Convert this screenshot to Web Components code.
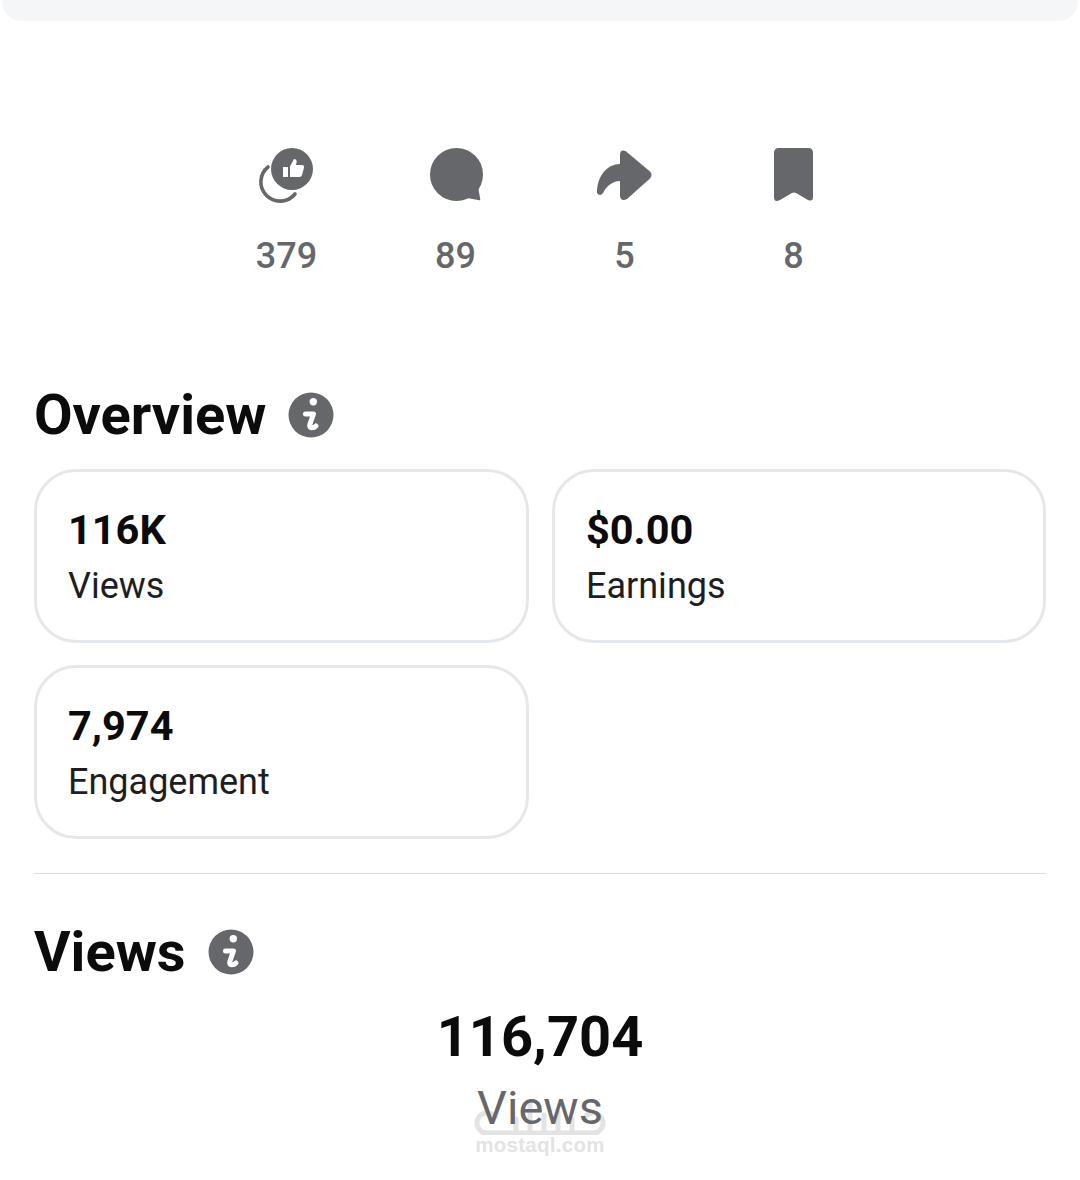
<!DOCTYPE html>
<html lang="en">
<head>
<meta charset="utf-8">
<title>Insights</title>
<style>
  html, body { margin: 0; background: #fff; }
  body { font-family: Roboto, "Liberation Sans", sans-serif; width: 1080px; height: 1180px; overflow: hidden; }
</style>
</head>
<body>
<insights-page>
  <stat-row>
    <stat-item value="379">
      <svg viewBox="0 0 60 60" width="60" height="60">
        <path d="M11 22A19.200 19.200 0 1 0 38 49" fill="none" stroke="#65676b" stroke-width="3.600" stroke-linecap="round"/>
        <circle cx="35" cy="24" r="21" fill="#65676b"/>
        <rect x="26" y="22" width="5" height="10" fill="#fff"/>
        <path d="M33 32V21.500l4-7.500c2 0 3 1.300 2.600 3.200L39 20h6c1.600 0 2.400 1.200 2 2.700l-2 7.300c-.4 1.300-1.200 2-2.500 2z" fill="#fff"/>
      </svg>
    </stat-item>
    <stat-item value="89">
      <svg viewBox="0 0 60 60" width="60" height="60">
        <circle cx="30.500" cy="29.500" r="26.500" fill="#65676b"/>
        <path d="M40 52L53.500 54.500 51 40z" fill="#65676b" stroke="#65676b" stroke-width="1.500" stroke-linejoin="round"/>
      </svg>
    </stat-item>
    <stat-item value="5">
      <svg viewBox="0 0 60 60" width="60" height="60">
        <path d="M25 10q0-6 5.500-4L55 26.500q3 3.500 0 7L32 54q-6 3-7-3V36C17 36 11 42 8 48q-3 4-6 0C2 30 13 19 25 19z" fill="#65676b"/>
      </svg>
    </stat-item>
    <stat-item value="8">
      <svg viewBox="0 0 60 60" width="60" height="60">
        <path d="M10 8q0-5 5-5H44q5 0 5 5V52q0 5-5 3L32 48q-2-1-4 0L16 55q-6 3-6-3z" fill="#65676b"/>
      </svg>
    </stat-item>
  </stat-row>

  <section-title style="margin-top:107px">Overview</section-title>
  <card-grid>
    <metric-card value="116K" label="Views"></metric-card>
    <metric-card value="$0.00" label="Earnings"></metric-card>
    <metric-card value="7,974" label="Engagement"></metric-card>
  </card-grid>
  <hr-line></hr-line>
  <section-title style="margin-top:48px">Views</section-title>
  <total-figure value="116,704" label="Views"></total-figure>
</insights-page>

<script>
// grey strip at the very top, stats, overview cards, views total
class InsightsPage extends HTMLElement {
  constructor() {
    super();
    this.attachShadow({ mode: "open" }).innerHTML = `
      <style>
        :host { display: block; position: relative; }
        .strip { height: 21px; margin: 0 2px; background: #f5f6f8; border-radius: 0 0 20px 20px; }
        .body { padding: 124px 34px 0; }
      </style>
      <div class="strip"></div>
      <div class="body"><slot></slot></div>`;
  }
}

class StatRow extends HTMLElement {
  constructor() {
    super();
    this.attachShadow({ mode: "open" }).innerHTML = `
      <style>
        :host { display: grid; grid-template-columns: repeat(4, 169px); justify-content: center; }
      </style>
      <slot></slot>`;
  }
}

class StatItem extends HTMLElement {
  constructor() {
    super();
    this.attachShadow({ mode: "open" }).innerHTML = `
      <style>
        :host { display: flex; flex-direction: column; align-items: center; }
        .icon { height: 60px; }
        .num { margin-top: 29px; font-size: 36px; line-height: 44px; font-weight: 500; color: #65676b; }
        ::slotted(svg) { display: block; }
      </style>
      <div class="icon"><slot></slot></div>
      <div class="num"></div>`;
  }
  connectedCallback() {
    this.shadowRoot.querySelector(".num").textContent = this.getAttribute("value");
  }
}

class SectionTitle extends HTMLElement {
  constructor() {
    super();
    this.attachShadow({ mode: "open" }).innerHTML = `
      <style>
        :host { display: flex; align-items: center; gap: 22px; height: 60px; }
        h2 { margin: 0; font-size: 56px; line-height: 60px; font-weight: 700; color: #0b0b0b; }
        svg { display: block; }
      </style>
      <h2><slot></slot></h2>
      <svg viewBox="0 0 46 46" width="46" height="46">
        <circle cx="23" cy="23" r="22.500" fill="#65676b"/>
        <circle cx="25.300" cy="9.700" r="3.700" fill="#fff"/>
        <path d="M17.500 22H25.500L21.800 32.500q-.8 3.300 2 3.300 2.500 0 4.200-1.800" fill="none" stroke="#fff" stroke-width="5" stroke-linecap="round" stroke-linejoin="round"/>
      </svg>`;
  }
}

class CardGrid extends HTMLElement {
  constructor() {
    super();
    this.attachShadow({ mode: "open" }).innerHTML = `
      <style>
        :host { display: grid; grid-template-columns: 495px 494px; gap: 22px 23px; margin-top: 24px; }
      </style>
      <slot></slot>`;
  }
}

class MetricCard extends HTMLElement {
  constructor() {
    super();
    this.attachShadow({ mode: "open" }).innerHTML = `
      <style>
        :host {
          display: block; box-sizing: border-box; height: 174px; padding: 34px 31px 0;
          border: 3px solid #e4e8ea; border-radius: 42px;
        }
        .val { font-size: 41.500px; line-height: 48px; font-weight: 700; color: #0b0b0b; }
        .lab { margin-top: 11px; font-size: 36px; line-height: 42px; color: #1c1e21; }
      </style>
      <div class="val"></div>
      <div class="lab"></div>`;
  }
  connectedCallback() {
    this.shadowRoot.querySelector(".val").textContent = this.getAttribute("value");
    this.shadowRoot.querySelector(".lab").textContent = this.getAttribute("label");
  }
}

class HrLine extends HTMLElement {
  constructor() {
    super();
    this.attachShadow({ mode: "open" }).innerHTML = `
      <style>:host { display: block; height: 1px; margin-top: 34px; background: #d9dbde; }</style>`;
  }
}

class TotalFigure extends HTMLElement {
  constructor() {
    super();
    this.attachShadow({ mode: "open" }).innerHTML = `
      <style>
        :host { display: flex; flex-direction: column; align-items: center; position: relative; margin-top: 23px; }
        .val { font-size: 56px; line-height: 64px; font-weight: 700; color: #0b0b0b; }
        .lab { position: relative; margin-top: 12px; font-size: 47px; line-height: 54px; color: #65676b; }
        /* faint site stamp lying over the bottom of the block */
        .stamp { position: absolute; left: 50%; top: 88px; width: 132px; margin-left: -66px; text-align: center; }
        .stamp svg { display: block; margin: 0 auto; }
        .stamp span { display: block; margin-top: -2px; font: 700 20.500px/24px "Liberation Sans", sans-serif; letter-spacing: .3px; color: #e3e3e3; }
      </style>
      <div class="val"></div>
      <div class="stamp">
        <svg viewBox="0 0 132 42" width="132" height="42" fill="none" stroke="#e3e3e3" stroke-width="5" stroke-linecap="round">
          <path d="M21 24A10 10 0 1 0 13 40H119A10 10 0 1 0 111 24"/>
          <path d="M42 26V38M56 12V38M70 22V38M84 20V38M98 26V38"/>
        </svg>
        <span>mostaql.com</span>
      </div>
      <div class="lab"></div>`;
  }
  connectedCallback() {
    this.shadowRoot.querySelector(".val").textContent = this.getAttribute("value");
    this.shadowRoot.querySelector(".lab").textContent = this.getAttribute("label");
  }
}

customElements.define("insights-page", InsightsPage);
customElements.define("stat-row", StatRow);
customElements.define("stat-item", StatItem);
customElements.define("section-title", SectionTitle);
customElements.define("card-grid", CardGrid);
customElements.define("metric-card", MetricCard);
customElements.define("hr-line", HrLine);
customElements.define("total-figure", TotalFigure);
</script>
</body>
</html>
